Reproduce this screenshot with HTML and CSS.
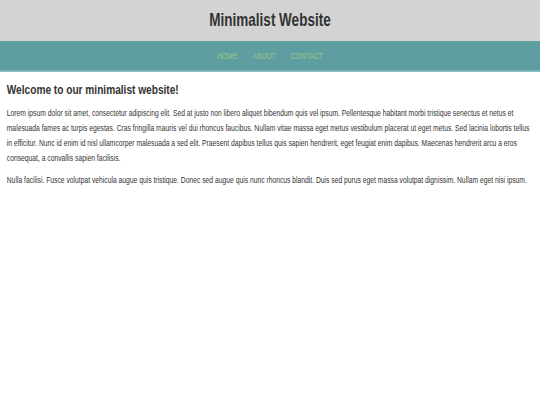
FILE: index.html
```html
<!DOCTYPE html>
<html>
<head>
<meta charset="utf-8">
<link rel="stylesheet" href="styles.css">
</head>
<body>
<div class="page">
  <header class="site-header">
    <h1 class="site-title">Minimalist Website</h1>
  </header>
  <nav class="site-nav">
    <a href="#" class="nav-link">HOME</a>
    <a href="#" class="nav-link">ABOUT</a>
    <a href="#" class="nav-link">CONTACT</a>
  </nav>
  <main class="content">
    <h2 class="welcome">Welcome to our minimalist website!</h2>
    <p class="text">Lorem ipsum dolor sit amet, consectetur adipiscing elit. Sed at justo non libero aliquet bibendum quis vel ipsum. Pellentesque habitant morbi tristique senectus et netus et malesuada fames ac turpis egestas. Cras fringilla mauris vel dui rhoncus faucibus. Nullam vitae massa eget metus vestibulum placerat ut eget metus. Sed lacinia lobortis tellus in efficitur. Nunc id enim id nisl ullamcorper malesuada a sed elit. Praesent dapibus tellus quis sapien hendrerit, eget feugiat enim dapibus. Maecenas hendrerit arcu a eros consequat, a convallis sapien facilisis.</p>
    <p class="text">Nulla facilisi. Fusce volutpat vehicula augue quis tristique. Donec sed augue quis nunc rhoncus blandit. Duis sed purus eget massa volutpat dignissim. Nullam eget nisi ipsum.</p>
  </main>
</div>
</body>
</html>
```
FILE: styles.css
```css
html, body {
  margin: 0;
  padding: 0;
  background: #ffffff;
  overflow: hidden;
}
body {
  width: 540px;
  height: 405px;
}
.page {
  width: 1280px;
  transform: scale(0.421875, 0.5625);
  transform-origin: 0 0;
  font-family: "Liberation Sans", Arial, sans-serif;
  font-size: 16px;
  line-height: 1.6;
  color: #333333;
}
.site-header {
  background: #d3d3d3;
  height: 73px;
  display: flex;
  align-items: center;
  justify-content: center;
}
.site-title {
  margin: 0;
  font-size: 32px;
  line-height: 1.2;
  font-weight: bold;
  color: #333333;
}
.site-nav {
  background: #5f9ea0;
  height: 50px;
  padding-top: 2px;
  border-bottom: 3px solid #8cc0c1;
  display: flex;
  align-items: center;
  justify-content: center;
  gap: 36px;
}
.nav-link {
  color: #8fbc8f;
  text-decoration: none;
  font-size: 16px;
  -webkit-text-stroke: 0.4px #8fbc8f;
}
.content {
  padding: 0 16px;
}
.welcome {
  margin: 17px 0 14px;
  font-size: 24px;
  line-height: 1.15;
  font-weight: bold;
  color: #333333;
}
.text {
  margin: 0 0 11px;
  font-size: 16px;
  line-height: 1.7;
  color: #333333;
}
```
